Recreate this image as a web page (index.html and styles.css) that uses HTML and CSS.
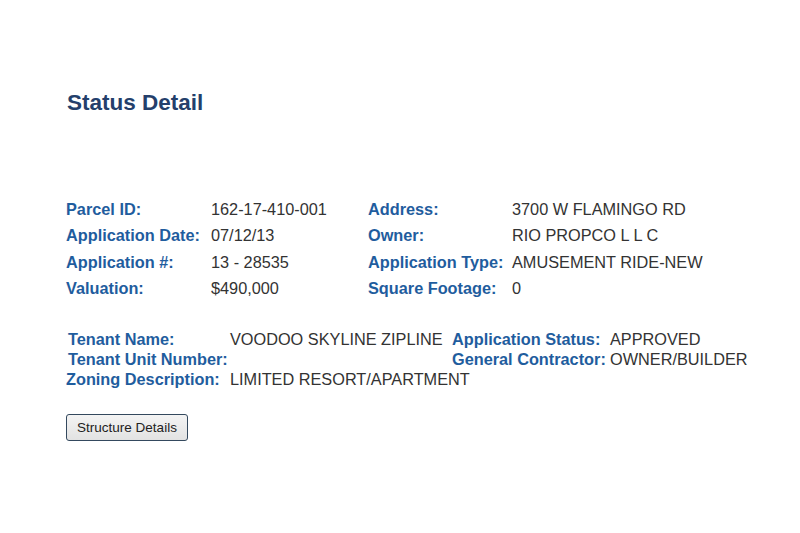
FILE: index.html
```html
<!DOCTYPE HTML>
<html>
<head>
  <title>Status Detail</title>
  <meta charset="UTF-8" name="viewport" content="width=device-width, initial-scale=1">
  <link rel="stylesheet" href="styles.css">
</head>
<body>
  <div class="content">
    <h1>Status Detail</h1>

    <div class="summary">
      <div class="label">Parcel ID:</div>
      <div class="value">162-17-410-001</div>
      <div class="label">Address:</div>
      <div class="value">3700 W FLAMINGO RD</div>

      <div class="label">Application Date:</div>
      <div class="value">07/12/13</div>
      <div class="label">Owner:</div>
      <div class="value">RIO PROPCO L L C</div>

      <div class="label">Application #:</div>
      <div class="value">13 - 28535</div>
      <div class="label">Application Type:</div>
      <div class="value">AMUSEMENT RIDE-NEW</div>

      <div class="label">Valuation:</div>
      <div class="value">$490,000</div>
      <div class="label">Square Footage:</div>
      <div class="value">0</div>
    </div>

    <div class="tenant">
      <div class="label">Tenant Name:</div>
      <div class="value">VOODOO SKYLINE ZIPLINE</div>
      <div class="label">Application Status:</div>
      <div class="value">APPROVED</div>

      <div class="label">Tenant Unit Number:</div>
      <div class="value"></div>
      <div class="label">General Contractor:</div>
      <div class="value">OWNER/BUILDER</div>

      <div class="label zoning">Zoning Description:</div>
      <div class="value wide">LIMITED RESORT/APARTMENT</div>
    </div>

    <button class="button">Structure Details</button>
  </div>
</body>
</html>
```

FILE: styles.css
```css
html {
  font-family: 'Liberation Sans', Arial, sans-serif;
  background-color: #ffffff;
  color: #333333;
}
body {
  margin: 0;
}
.content {
  padding: 90px 0 0 66px;
}
h1 {
  font-size: 22.5px;
  line-height: 26px;
  font-weight: bold;
  color: #243f6b;
  margin: 0 0 80px 1px;
}
.label {
  font-weight: bold;
  color: #1f5d9e;
}
.value {
  color: #333333;
}
.summary {
  display: grid;
  grid-template-columns: 145px 157px 144px auto;
  font-size: 16.3px;
  line-height: 26.3px;
}
.tenant {
  display: grid;
  grid-template-columns: 162px 222px 158px auto;
  font-size: 16.3px;
  line-height: 20px;
  margin: 28px 0 0 2px;
}
.tenant .zoning {
  margin-left: -2px;
}
.tenant .wide {
  grid-column: 2 / 5;
}
.button {
  margin-top: 25px;
  width: 122px;
  height: 27px;
  padding: 0;
  font-family: 'Liberation Sans', Arial, sans-serif;
  font-size: 13.5px;
  color: #222222;
  background: linear-gradient(#f4f4f4, #e2e2e2);
  border: 1px solid #34495e;
  border-radius: 3px;
}
```
